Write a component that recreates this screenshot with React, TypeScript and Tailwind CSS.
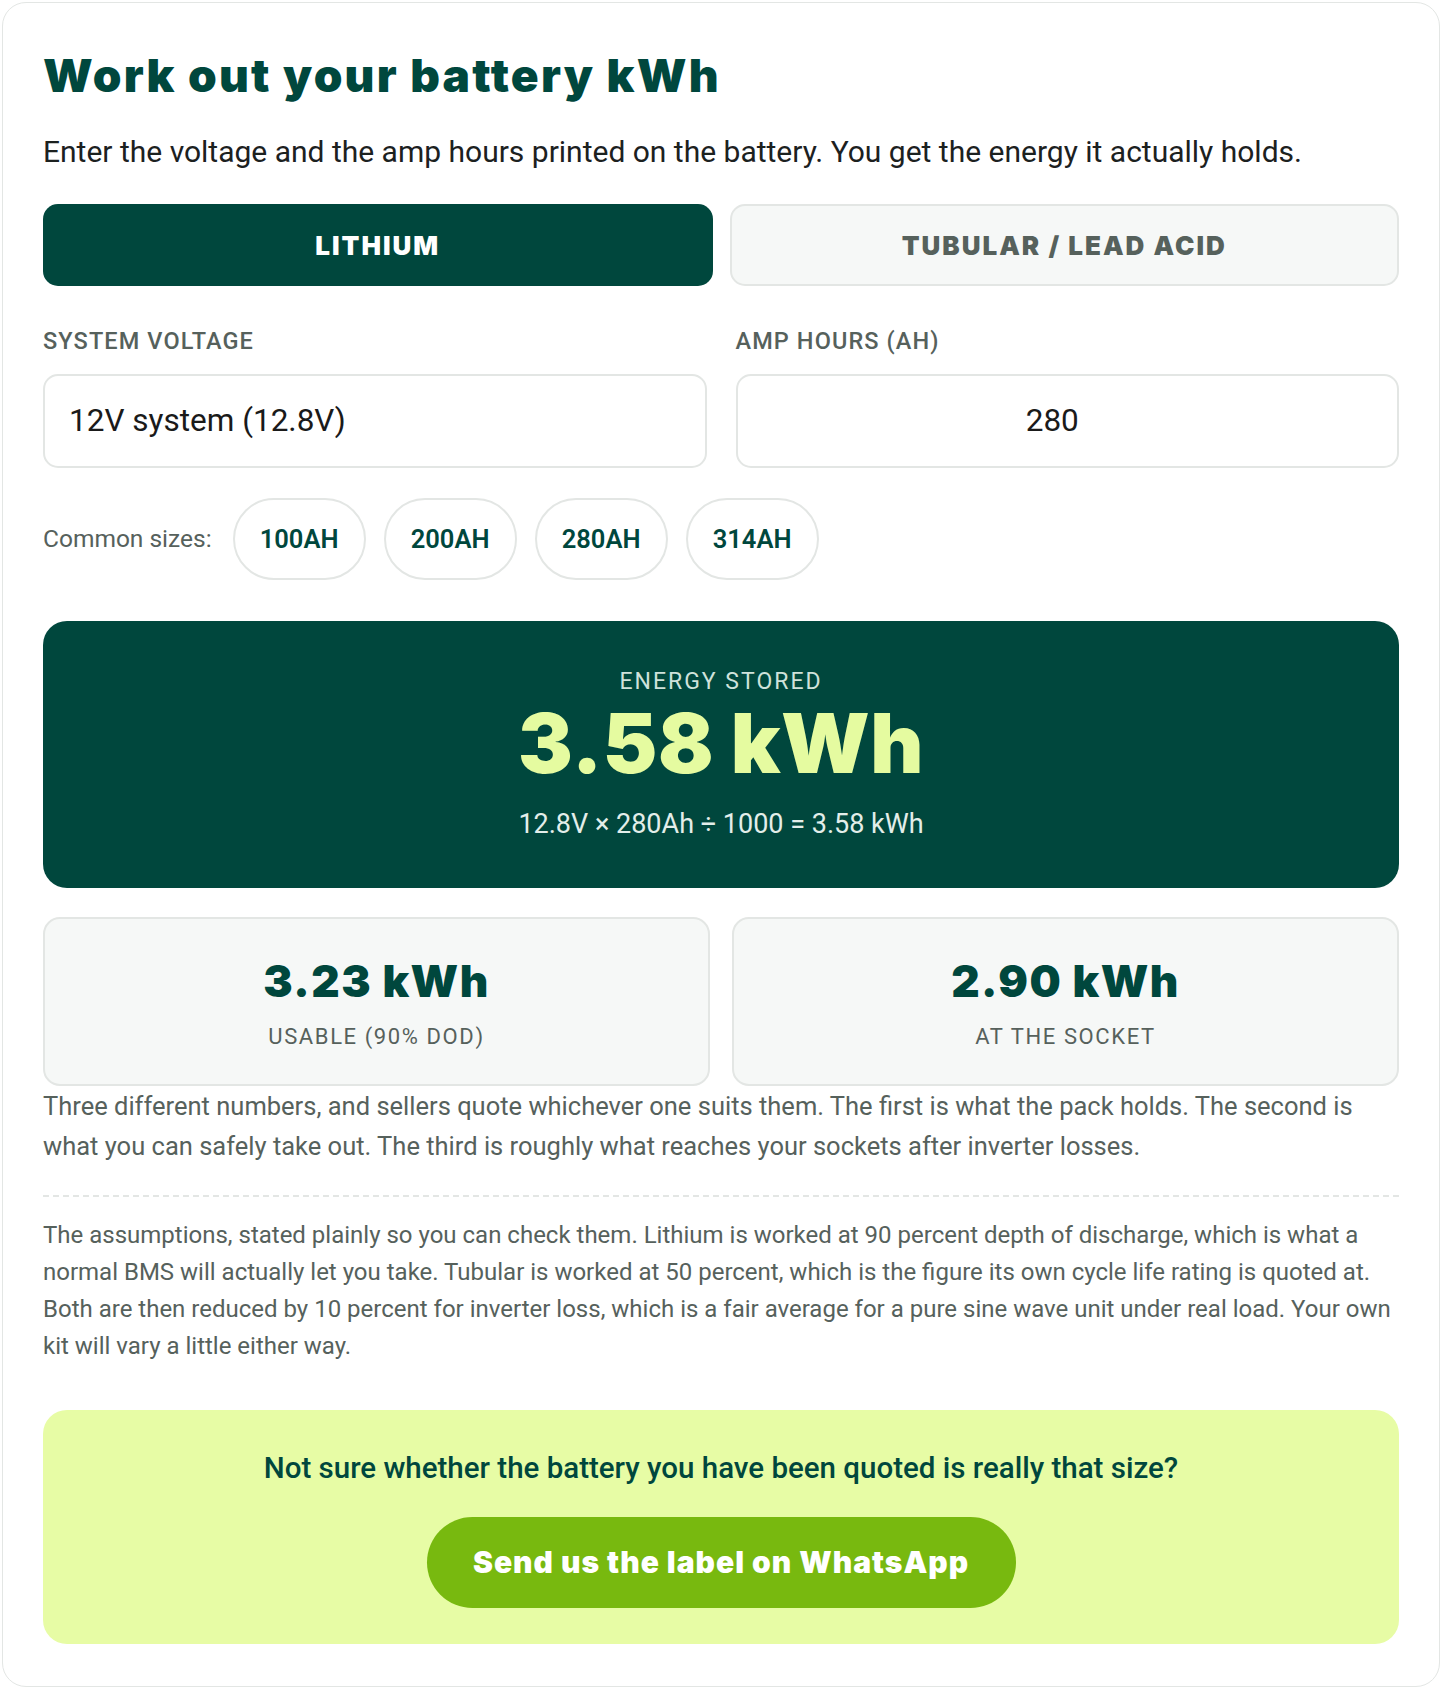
import React from 'react'

const heavy = { fontFamily: 'Inter, "Noto Sans", sans-serif' }
const body = { fontFamily: 'Roboto, "Liberation Sans", sans-serif' }

const sizes = ['100AH', '200AH', '280AH', '314AH']

export default function App() {
  return (
    <div className="min-h-screen bg-white p-[2px]" style={body}>
      <div className="rounded-[24px] border border-[#e3e6e4] bg-white px-[40px] pt-[46px] pb-[42px]">
        <h1
          className="text-[46px] leading-[53px] font-black tracking-[2.2px] text-[#00473d]"
          style={heavy}
        >
          Work out your battery kWh
        </h1>
        <p className="mt-[30px] text-[30px] leading-[39px] text-[#1c211f]">
          Enter the voltage and the amp hours printed on the battery. You get the energy it actually holds.
        </p>

        {/* battery type */}
        <div className="mt-[33px] grid grid-cols-2 gap-[17px]">
          <button
            className="h-[82px] rounded-[15px] bg-[#00473d] text-[26px] font-black tracking-[2px] text-white"
            style={heavy}
          >
            LITHIUM
          </button>
          <button
            className="h-[82px] rounded-[15px] border-2 border-[#e3e6e4] bg-[#f6f8f7] text-[26px] font-black tracking-[2px] text-[#56615c]"
            style={heavy}
          >
            TUBULAR / LEAD ACID
          </button>
        </div>

        <div className="mt-[42px] grid grid-cols-2 gap-[29px]">
          <div>
            <div className="text-[23.5px] leading-[26px] font-medium tracking-[1.1px] text-[#56615c]">SYSTEM VOLTAGE</div>
            <div className="mt-[20px] flex h-[94px] items-center rounded-[15px] border-2 border-[#e3e6e4] bg-white px-[24px] text-[31.5px] text-[#1a1a1a]">
              12V system (12.8V)
            </div>
          </div>
          <div>
            <div className="text-[23.5px] leading-[26px] font-medium tracking-[1.1px] text-[#56615c]">AMP HOURS (AH)</div>
            <div className="mt-[20px] flex h-[94px] items-center justify-center rounded-[15px] border-2 border-[#e3e6e4] bg-white pr-[30px] text-[31.5px] text-[#1a1a1a]">
              280
            </div>
          </div>
        </div>

        <div className="mt-[30px] flex items-center gap-[18px]">
          <span className="mr-[3px] text-[24.5px] text-[#56615c]">Common sizes:</span>
          {sizes.map((s) => (
            <span
              key={s}
              className="flex h-[82px] w-[133px] items-center justify-center rounded-full border-2 border-[#e3e6e4] text-[25.5px] font-semibold text-[#00473d]"
            >
              {s}
            </span>
          ))}
        </div>

        {/* result */}
        <div className="mt-[41px] flex flex-col items-center rounded-[24px] bg-[#00473d] pt-[48px] pb-[48px]">
          <div className="text-[23px] leading-[26px] tracking-[2px] text-[#cfe2db]">ENERGY STORED</div>
          <div
            className="mt-[8px] text-[82px] leading-[82px] font-black tracking-[0.5px] text-[#e5fba0]"
            style={heavy}
          >
            3.58 kWh
          </div>
          <div className="mt-[23px] text-[27px] leading-[32px] text-[#e3eeea]">
            12.8V × 280Ah ÷ 1000 = 3.58 kWh
          </div>
        </div>

        <div className="mt-[29px] grid grid-cols-2 gap-[22px]">
          <div className="flex flex-col items-center rounded-[17px] border-2 border-[#e3e6e4] bg-[#f6f8f7] pt-[41px] pb-[34px]">
            <div className="text-[44px] leading-[42px] font-black tracking-[1.5px] text-[#00473d]" style={heavy}>
              3.23 kWh
            </div>
            <div className="mt-[22px] text-[22px] leading-[26px] tracking-[1.6px] text-[#56615c]">USABLE (90% DOD)</div>
          </div>
          <div className="flex flex-col items-center rounded-[17px] border-2 border-[#e3e6e4] bg-[#f6f8f7] pt-[41px] pb-[34px]">
            <div className="text-[44px] leading-[42px] font-black tracking-[1.5px] text-[#00473d]" style={heavy}>
              2.90 kWh
            </div>
            <div className="mt-[22px] text-[22px] leading-[26px] tracking-[1.6px] text-[#56615c]">AT THE SOCKET</div>
          </div>
        </div>

        <p className="text-[25.5px] leading-[40px] text-[#56615c]">
          Three different numbers, and sellers quote whichever one suits them. The first is what the pack holds. The second is what you can safely take out. The third is roughly what reaches your sockets after inverter losses.
        </p>

        <div className="mt-[29px] border-t-2 border-dashed border-[#e3e6e4]" />

        <p className="mt-[20px] text-[24px] leading-[37px] text-[#56615c]">
          The assumptions, stated plainly so you can check them. Lithium is worked at 90 percent depth of discharge, which is what a normal BMS will actually let you take. Tubular is worked at 50 percent, which is the figure its own cycle life rating is quoted at. Both are then reduced by 10 percent for inverter loss, which is a fair average for a pure sine wave unit under real load. Your own kit will vary a little either way.
        </p>

        {/* cta */}
        <div className="mt-[45px] flex flex-col items-center rounded-[24px] bg-[#e7fca5] pt-[40px] pb-[36px]">
          <div className="text-[29.5px] leading-[36px] font-medium text-[#00473d]">
            Not sure whether the battery you have been quoted is really that size?
          </div>
          <button
            className="mt-[31px] h-[91px] w-[589px] rounded-full bg-[#78b90f] text-[30px] font-black tracking-[1px] text-white"
            style={heavy}
          >
            Send us the label on WhatsApp
          </button>
        </div>
      </div>
    </div>
  )
}
